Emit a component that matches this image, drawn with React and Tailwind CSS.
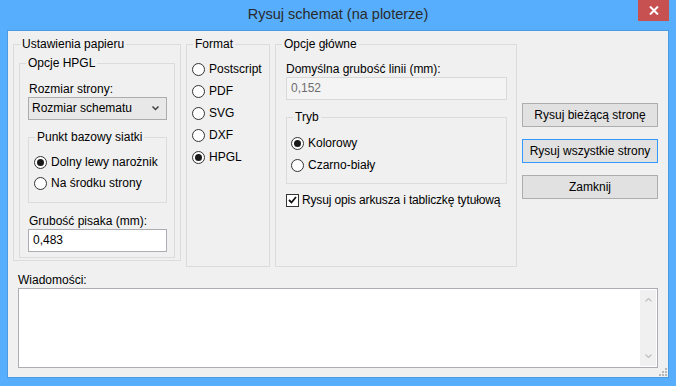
import React from 'react';

const Radio = ({ checked, label }) => (
    <div className="flex items-center gap-[4px] h-[22px]">
        <span className="w-[13px] h-[13px] rounded-full border border-[#333333] bg-white flex items-center justify-center shrink-0">
            {checked && <span className="w-[7px] h-[7px] rounded-full bg-[#1a1a1a]"></span>}
        </span>
        <span>{label}</span>
    </div>
);

const Group = ({ title, className, children }) => (
    <fieldset className={`border border-[#dcdcdc] ${className}`}>
        <legend className="ml-[6px] px-[2px] leading-[14px]">{title}</legend>
        {children}
    </fieldset>
);

const Button = ({ label, active }) => (
    <button className={`h-[24px] w-full bg-[#e1e1e1] border text-[#000] ${active ? 'border-[#3399ff]' : 'border-[#adadad]'}`}>
        {label}
    </button>
);

const App = () => {
    return (
        <div className="w-[676px] h-[386px] bg-[#56aefd] flex flex-col font-['Liberation_Sans',Arial,sans-serif] text-[12px] leading-[15px] text-black">
            {/* Title bar */}
            <div className="relative h-[30px] flex items-center justify-center">
                <span className="text-[14.5px] text-[#2a2a2a] pb-[1px]">Rysuj schemat (na ploterze)</span>
                <button className="absolute right-[7px] top-0 w-[31px] h-[21px] bg-[#c75050] flex items-center justify-center">
                    <svg width="10" height="9" viewBox="0 0 10 9">
                        <path d="M1 0.5 L9 8.5 M9 0.5 L1 8.5" stroke="white" strokeWidth="2" />
                    </svg>
                </button>
            </div>

            {/* Client area */}
            <div className="relative mx-[7px] mb-[8px] flex-1 border border-[#4b9be4] bg-[#f0f0f0] pt-[6px]">
                <div className="flex items-start pl-[5px]">
                    {/* Ustawienia papieru */}
                    <Group title="Ustawienia papieru" className="w-[168px] h-[224px]">
                        <Group title="Opcje HPGL" className="ml-[5px] mt-[5px] w-[156px] h-[202px]">
                            <div className="pl-[8px]">
                                <div className="mt-[12px] pl-[1px]">Rozmiar strony:</div>
                                <div className="w-[139px] h-[23px] border border-[#acacac] bg-[#e8e8e8] flex items-center justify-between pl-[3px] pr-[7px]">
                                    <span>Rozmiar schematu</span>
                                    <svg width="7" height="5" viewBox="0 0 7 5">
                                        <path d="M0.5 0.5 L3.5 3.5 L6.5 0.5" stroke="#404040" strokeWidth="1.5" fill="none" />
                                    </svg>
                                </div>
                                <Group title="Punkt bazowy siatki" className="mt-[10px] w-[139px] h-[73px]">
                                    <div className="pl-[5px] mt-[8px] flex flex-col">
                                        <div className="h-[21px] flex items-center"><Radio checked label="Dolny lewy narożnik" /></div>
                                        <div className="h-[21px] flex items-center"><Radio label="Na środku strony" /></div>
                                    </div>
                                </Group>
                                <div className="mt-[11px] pl-[1px]">Grubość pisaka (mm):</div>
                                <div className="w-[139px] h-[23px] border border-[#abadb3] bg-white flex items-center pl-[4px]">0,483</div>
                            </div>
                        </Group>
                    </Group>

                    {/* Format */}
                    <Group title="Format" className="ml-[5px] w-[84px] h-[230px]">
                        <div className="pl-[5px] mt-[7px] flex flex-col">
                            <Radio label="Postscript" />
                            <Radio label="PDF" />
                            <Radio label="SVG" />
                            <Radio label="DXF" />
                            <Radio checked label="HPGL" />
                        </div>
                    </Group>

                    {/* Opcje główne */}
                    <Group title="Opcje główne" className="ml-[5px] w-[242px] h-[230px]">
                        <div className="pl-[10px]">
                            <div className="mt-[11px]">Domyślna grubość linii (mm):</div>
                            <div className="w-[221px] h-[23px] border border-[#d9d9d9] bg-[#f4f4f4] text-[#6d6d6d] flex items-center pl-[4px]">0,152</div>
                            <Group title="Tryb" className="mt-[10px] w-[221px] h-[74px]">
                                <div className="pl-[4px] mt-[8px] flex flex-col">
                                    <Radio checked label="Kolorowy" />
                                    <Radio label="Czarno-biały" />
                                </div>
                            </Group>
                            <div className="mt-[6px] h-[20px] flex items-center gap-[3px]">
                                <span className="w-[13px] h-[13px] border border-[#333333] bg-white flex items-center justify-center">
                                    <svg width="9" height="8" viewBox="0 0 9 8">
                                        <path d="M1 4 L3.5 6.5 L8 1" stroke="#111" strokeWidth="1.8" fill="none" />
                                    </svg>
                                </span>
                                <span className="tracking-[-0.15px]">Rysuj opis arkusza i tabliczkę tytułową</span>
                            </div>
                        </div>
                    </Group>

                    {/* Buttons */}
                    <div className="ml-[5px] w-[136px] pt-[66px] flex flex-col gap-[12px]">
                        <Button label="Rysuj bieżącą stronę" />
                        <Button label="Rysuj wszystkie strony" active />
                        <Button label="Zamknij" />
                    </div>
                </div>

                {/* Messages */}
                <div className="pl-[10px]">
                    <div className="mt-[6px]">Wiadomości:</div>
                    <div className="w-[640px] h-[80px] border border-[#abadb3] bg-white flex justify-end">
                        <div className="w-[16px] my-[1px] mr-[1px] bg-[#f0f0f0] flex flex-col items-center justify-between py-[8px]">
                            <svg width="7" height="4" viewBox="0 0 7 4">
                                <path d="M0.5 3.5 L3.5 0.5 L6.5 3.5" stroke="#c2c2c2" strokeWidth="1.3" fill="none" />
                            </svg>
                            <svg width="7" height="4" viewBox="0 0 7 4">
                                <path d="M0.5 0.5 L3.5 3.5 L6.5 0.5" stroke="#c2c2c2" strokeWidth="1.3" fill="none" />
                            </svg>
                        </div>
                    </div>
                </div>

                {/* Resize grip */}
                <svg className="absolute right-[1px] bottom-[1px]" width="8" height="8" viewBox="0 0 8 8">
                    <rect x="6" y="0" width="2" height="2" fill="#b8b8b8" />
                    <rect x="3" y="3" width="2" height="2" fill="#b8b8b8" />
                    <rect x="6" y="3" width="2" height="2" fill="#b8b8b8" />
                    <rect x="0" y="6" width="2" height="2" fill="#b8b8b8" />
                    <rect x="3" y="6" width="2" height="2" fill="#b8b8b8" />
                    <rect x="6" y="6" width="2" height="2" fill="#b8b8b8" />
                </svg>
            </div>
        </div>
    );
};

export default App;
